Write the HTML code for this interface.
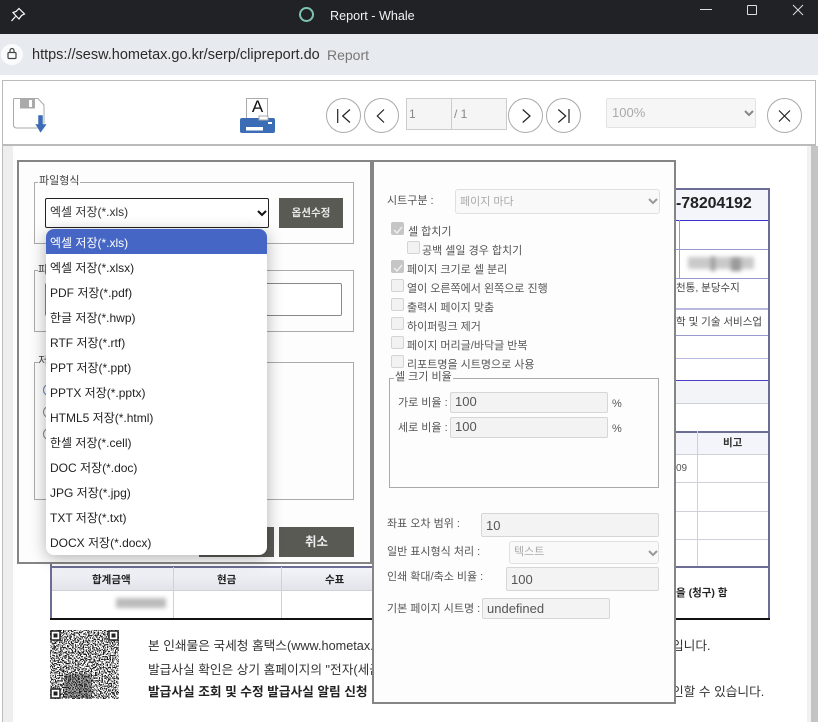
<!DOCTYPE html>
<html lang="ko"><head><meta charset="utf-8"><title>Report - Whale</title>
<style>
html,body{margin:0;padding:0;width:818px;height:722px;overflow:hidden;background:#fff}
body{position:relative;font-family:"Liberation Sans","Noto Sans CJK KR",sans-serif;font-size:12px;color:#333}
div,span,svg{position:absolute;box-sizing:border-box;white-space:nowrap}
.t{line-height:16px}
.h{background:#99c;height:1px}
.v{background:#99c;width:1px}
.dh{background:#6b6d94;height:2px}
.g{background:#cfd0d8}
.opt{left:46px;width:222px;height:25px;line-height:25px;padding-left:4px;font-size:12px;color:#222}
.lbl{font-size:11px;color:#555;line-height:14px}
.cb{width:13px;height:13px;border:1px solid #d4d4d4;border-radius:2px;background:#f2f2f2}
.cb.on{background:#c6c6c6;border-color:#c6c6c6}
.inp{background:#f3f3f3;border:1px solid #d6d6d6;border-radius:2px;color:#555;font-size:13px;padding-left:4px}
.sel{background:#f9f9f9;border:1px solid #e0e0e0;border-radius:3px;color:#aaa;font-size:11px}
.nav{width:35px;height:35px;border:1px solid #aaa;border-radius:50%;background:#fff;top:98px}
.bl{filter:blur(2px);background:#aaa}
</style></head><body>

<!-- title bar -->
<div style="left:0;top:0;width:818px;height:34px;background:#212226"></div>
<svg style="left:9px;top:6px" width="18" height="18" viewBox="0 0 18 18" fill="none" stroke="#fff" stroke-width="1.2"><path d="M10 2.500 15.500 8 12.500 9.500 10 13 8.500 11.500 4 6.500 7 5.500ZM6.500 10.500 2.500 15"/></svg>
<div style="left:299px;top:7px;width:15px;height:15px;border:2px solid #7fc4ad;border-radius:50%"></div>
<div class="t" style="left:330px;top:8px;color:#f2f2f2;font-size:12.600px">Report - Whale</div>
<div style="left:700px;top:9px;width:12px;height:1px;background:#ddd"></div>
<div style="left:747px;top:5px;width:10px;height:10px;border:1px solid #ddd;border-radius:1px"></div>
<svg style="left:792px;top:4px" width="12" height="12" viewBox="0 0 12 12" stroke="#ddd" stroke-width="1"><path d="M1 1 11 11M11 1 1 11"/></svg>

<!-- address bar -->
<div style="left:0;top:34px;width:818px;height:41px;background:#e7eaef"></div>
<div style="left:1px;top:44px;width:22px;height:21px;background:#fafbfc;border-radius:50%"></div>
<svg style="left:6px;top:47px" width="12" height="13" viewBox="0 0 12 13" fill="none" stroke="#444" stroke-width="1.2"><rect x="2" y="5.500" width="8" height="6" rx="1"/><path d="M4 5.500V3.500a2 2 0 0 1 4 0V5.500"/></svg>
<div class="t" style="left:32px;top:47px;font-size:14.500px;color:#2b2b2b">https://sesw.hometax.go.kr/serp/clipreport.do</div>
<div class="t" style="left:327px;top:47px;font-size:14px;color:#777">Report</div>

<!-- viewer -->
<div style="left:2px;top:80px;width:814px;height:642px;border:1px solid #bbb;border-bottom:0;background:#fff"></div>
<div style="left:3px;top:144px;width:812px;height:2px;background:#bbb"></div>
<div style="left:3px;top:146px;width:10px;height:576px;background:#eee"></div>
<div style="left:807px;top:146px;width:4px;height:576px;background:#f1f1f1"></div>
<div style="left:811px;top:146px;width:7px;height:576px;background:#c4c4c4"></div>

<!-- save icon -->
<svg style="left:12px;top:97px" width="38" height="37" viewBox="0 0 38 37"><path d="M2 1.500H26L32 8V31H5Q1.500 31 1.500 28V3Z" fill="#fff" stroke="#aaa"/><rect x="8" y="1.500" width="15" height="10" fill="#aaa"/><rect x="17" y="3" width="3" height="7" fill="#fff"/><path d="M26 18H31V27H35L28.500 36 23 27H26Z" fill="#3b6cb5" stroke="#fff" stroke-width=".5"/></svg>
<!-- print icon -->
<svg style="left:239px;top:97px" width="37" height="37" viewBox="0 0 37 37"><rect x="7.500" y="1.500" width="21" height="22" fill="#fff" stroke="#aaa"/><rect x="1" y="21" width="35" height="15" rx="2" fill="#3b6cb5"/><rect x="7" y="30" width="17" height="3.500" fill="#fff"/><rect x="29" y="25" width="4" height="2" fill="#fff"/><rect x="20" y="19" width="9" height="4" fill="#fff" stroke="#aaa"/></svg>
<div style="left:239px;top:97px;width:37px;text-align:center;font-size:17px;line-height:20px;color:#111">A</div>

<!-- nav -->
<div class="nav" style="left:326px"></div>
<div class="nav" style="left:364px"></div>
<div class="nav" style="left:508px"></div>
<div class="nav" style="left:546px"></div>
<div class="nav" style="left:767px"></div>
<svg style="left:326px;top:98px" width="256" height="35" viewBox="0 0 256 35" fill="none" stroke="#222" stroke-width="1.200"><path d="M11.700 11V25M24 11.500 16.700 18 24 24.500"/><path d="M58 11.500 51.300 18 58 24.500"/><path d="M196.700 11.500 204 18 196.700 24.500"/><path d="M232.300 11.500 239.700 18 232.300 24.500M243 11V25"/></svg>
<svg style="left:767px;top:98px" width="35" height="35" viewBox="0 0 35 35" stroke="#222" stroke-width="1.200"><path d="M12 12.500 23 23.500M23 12.500 12 23.500"/></svg>
<div style="left:406px;top:98px;width:46px;height:32px;background:#f5f5f5;border:1px solid #ccc;border-right:0;color:#888;line-height:30px;padding-left:2px">1</div>
<div style="left:451px;top:98px;width:56px;height:32px;background:#f5f5f5;border:1px solid #ccc;color:#888;line-height:30px;padding-left:2px">/ 1</div>
<div style="left:606px;top:98px;width:150px;height:30px;background:#f6f6f6;border:1px solid #e3e3e3;border-radius:2px;color:#aaa;font-size:13px;line-height:27px;padding-left:5px">100%</div>
<svg style="left:744px;top:110px" width="10" height="7" viewBox="0 0 10 7" fill="none" stroke="#888" stroke-width="2"><path d="M1 1 5 5 9 1"/></svg>

<!-- background document -->
<div style="left:370px;top:188px;width:400px;height:432px;background:#fff"></div>
<div style="left:676px;top:190px;width:93px;height:30px;background:#f3f5fb"></div>
<div class="t" style="left:676px;top:195px;font-size:16px;font-weight:bold;color:#222;line-height:18px;letter-spacing:-.1px">-78204192</div>
<div style="left:676px;top:188px;width:94px;height:2px;background:#6b6d94"></div>
<div style="left:676px;top:220px;width:94px;height:1px;background:#3a32d0"></div>
<div class="v" style="left:679px;top:220px;height:59px"></div>
<div class="h" style="left:676px;top:249px;width:93px"></div>
<div class="h" style="left:676px;top:278px;width:93px"></div>
<div class="h" style="left:676px;top:308px;width:93px;height:2px;background:#b9b9e0"></div>
<div class="h" style="left:676px;top:335px;width:93px"></div>
<div class="h" style="left:676px;top:358px;width:93px;background:#b9b9e0"></div>
<div class="bl" style="left:688px;top:257px;width:66px;height:12px;background:#c9c9c9"></div>
<div class="bl" style="left:711px;top:257px;width:4px;height:14px;background:#999"></div>
<div class="bl" style="left:731px;top:258px;width:10px;height:13px;background:#999"></div>
<div class="t" style="left:676px;top:280px;font-size:10.500px;color:#444">천통, 분당수지</div>
<div class="t" style="left:676px;top:314px;font-size:10.500px;color:#444">학 및 기술 서비스업</div>
<div style="left:676px;top:380px;width:93px;height:24px;background:#f3f4f8"></div>
<div style="left:676px;top:380px;width:93px;height:1px;background:#4a3fc0"></div>
<div class="g" style="left:676px;top:403px;width:93px;height:1px"></div>
<div style="left:676px;top:431px;width:93px;height:23px;background:#f3f5fa"></div>
<div class="dh" style="left:676px;top:431px;width:93px"></div>
<div class="g" style="left:676px;top:454px;width:93px;height:1px"></div>
<div class="g" style="left:676px;top:482px;width:93px;height:1px"></div>
<div class="g" style="left:676px;top:511px;width:93px;height:1px"></div>
<div class="g" style="left:676px;top:539px;width:93px;height:1px"></div>
<div class="g" style="left:697px;top:431px;width:1px;height:136px"></div>
<div class="t" style="left:723px;top:435px;font-size:10.500px;font-weight:bold;color:#333">비고</div>
<div class="t" style="left:676px;top:461px;font-size:10px;color:#555">09</div>
<div class="dh" style="left:676px;top:566px;width:93px"></div>
<div class="t" style="left:676px;top:585px;font-size:10.500px;font-weight:bold;color:#222">을 (청구) 함</div>

<!-- lower table -->
<div style="left:50px;top:564px;width:2px;height:56px;background:#6b6d94"></div>
<div style="left:768px;top:188px;width:2px;height:432px;background:#6b6d94"></div>
<div style="left:52px;top:567px;width:320px;height:23px;background:linear-gradient(#f3f5fa,#e2e4ea)"></div>
<div class="dh" style="left:50px;top:566px;width:322px"></div>
<div class="g" style="left:52px;top:590px;width:320px;height:1px"></div>
<div class="g" style="left:173px;top:567px;width:1px;height:52px"></div>
<div class="g" style="left:281px;top:567px;width:1px;height:52px"></div>
<div style="left:50px;top:618px;width:322px;height:2px;background:#111"></div>
<div style="left:676px;top:618px;width:94px;height:2px;background:#111"></div>
<div class="t" style="left:92px;top:572px;font-size:10.500px;font-weight:bold;color:#222">합계금액</div>
<div class="t" style="left:217px;top:572px;font-size:10.500px;font-weight:bold;color:#222">현금</div>
<div class="t" style="left:325px;top:572px;font-size:10.500px;font-weight:bold;color:#222">수표</div>
<div class="bl" style="left:116px;top:598px;width:50px;height:10px;background:#bbb"></div>

<!-- QR -->
<svg style="left:50px;top:630px" width="69" height="69" viewBox="0 0 69 69">
<defs><filter id="n" x="0" y="0" width="100%" height="100%" color-interpolation-filters="sRGB"><feTurbulence type="fractalNoise" baseFrequency=".75" numOctaves="1" seed="7"/><feColorMatrix values="0 0 0 0 .08 0 0 0 0 .08 0 0 0 0 .08 7 7 0 0 -6.700"/></filter></defs>
<rect width="69" height="69" fill="#fff"/><rect width="69" height="69" fill="#000" filter="url(#n)"/>
<rect x="14" y="44" width="28" height="24" fill="#222" opacity=".4"/>
<g fill="#fff" stroke="#222" stroke-width="1.500"><rect x="1" y="1" width="9" height="9"/><rect x="59" y="1" width="9" height="9"/><rect x="1" y="59" width="9" height="9"/></g>
<g fill="#222"><rect x="3.500" y="3.500" width="4" height="4"/><rect x="61.500" y="3.500" width="4" height="4"/><rect x="3.500" y="61.500" width="4" height="4"/></g>
</svg>
<div class="t" style="left:148px;top:638px;font-size:12.700px;color:#333">본 인쇄물은 국세청 홈택스(www.hometax.</div>
<div class="t" style="left:148px;top:662px;font-size:12.700px;color:#333">발급사실 확인은 상기 홈페이지의 "전자(세금</div>
<div class="t" style="left:148px;top:684px;font-size:12.700px;font-weight:bold;color:#222">발급사실 조회 및 수정 발급사실 알림 신청 "</div>
<div class="t" style="left:672px;top:638px;font-size:12.700px;color:#333">입니다.</div>
<div class="t" style="left:672px;top:684px;font-size:12.700px;color:#333">인할 수 있습니다.</div>

<!-- dialog left -->
<div style="left:17px;top:160px;width:355px;height:404px;background:#fdfdfd;border:2px solid #858585"></div>
<div style="left:34px;top:182px;width:320px;height:62px;border:1px solid #aaa"></div>
<div class="lbl" style="left:38px;top:174px;background:#fdfdfd;padding:0 1px;color:#444">파일형식</div>
<div style="left:45px;top:198px;width:224px;height:30px;background:#fff;border:1px solid #222;border-radius:2px;line-height:27px;padding-left:4px;color:#333">엑셀 저장(*.xls)</div>
<svg style="left:257px;top:210px" width="10" height="7" viewBox="0 0 10 7" fill="none" stroke="#111" stroke-width="2"><path d="M1 1 5 5 9 1"/></svg>
<div style="left:279px;top:198px;width:64px;height:30px;background:#595a54;color:#e8e8e8;font-size:10.500px;font-weight:bold;text-align:center;line-height:31px">옵션수정</div>
<div style="left:34px;top:270px;width:320px;height:62px;border:1px solid #aaa"></div>
<div class="lbl" style="left:38px;top:263px;background:#fdfdfd;color:#444">파</div>
<div style="left:45px;top:283px;width:297px;height:33px;border:1px solid #888;border-radius:2px;background:#fff"></div>
<div style="left:34px;top:362px;width:320px;height:138px;border:1px solid #aaa"></div>
<div class="lbl" style="left:38px;top:354px;background:#fdfdfd;color:#444">저</div>
<div style="left:43px;top:384px;width:12px;height:12px;border:1px solid #6a7fd0;border-radius:50%;background:#fff"></div>
<div style="left:43px;top:406px;width:12px;height:12px;border:1px solid #888;border-radius:50%;background:#fff"></div>
<div style="left:43px;top:428px;width:12px;height:12px;border:1px solid #888;border-radius:50%;background:#fff"></div>
<div style="left:199px;top:527px;width:75px;height:30px;background:#595a54"></div>
<div style="left:279px;top:527px;width:75px;height:30px;background:#595a54;color:#eee;font-size:12.500px;font-weight:bold;text-align:center;line-height:30px">취소</div>

<!-- dropdown -->
<div style="left:46px;top:229px;width:221px;height:326px;background:#fff;border-radius:8px;box-shadow:0 3px 16px rgba(0,0,0,.3);overflow:hidden"></div>
<div style="left:46px;top:229px;width:221px;height:25px;background:#4566c4;border-radius:8px 8px 0 0"></div>
<div class="opt" style="top:231px;color:#fff">엑셀 저장(*.xls)</div>
<div class="opt" style="top:256px">엑셀 저장(*.xlsx)</div>
<div class="opt" style="top:281px">PDF 저장(*.pdf)</div>
<div class="opt" style="top:306px">한글 저장(*.hwp)</div>
<div class="opt" style="top:331px">RTF 저장(*.rtf)</div>
<div class="opt" style="top:356px">PPT 저장(*.ppt)</div>
<div class="opt" style="top:381px">PPTX 저장(*.pptx)</div>
<div class="opt" style="top:406px">HTML5 저장(*.html)</div>
<div class="opt" style="top:431px">한셀 저장(*.cell)</div>
<div class="opt" style="top:456px">DOC 저장(*.doc)</div>
<div class="opt" style="top:481px">JPG 저장(*.jpg)</div>
<div class="opt" style="top:506px">TXT 저장(*.txt)</div>
<div class="opt" style="top:531px">DOCX 저장(*.docx)</div>

<!-- dialog right -->
<div style="left:372px;top:160px;width:304px;height:544px;background:#fdfdfd;border:2px solid #858585"></div>
<div class="lbl" style="left:387px;top:194px">시트구분 :</div>
<div class="sel" style="left:455px;top:189px;width:205px;height:25px;line-height:24px;padding-left:4px">페이지 마다</div>
<svg style="left:648px;top:198px" width="10" height="7" viewBox="0 0 10 7" fill="none" stroke="#999" stroke-width="2"><path d="M1 1 5 5 9 1"/></svg>

<div class="cb on" style="left:391px;top:222px"></div><div class="lbl" style="left:408px;top:225px">셀 합치기</div>
<div class="cb" style="left:407px;top:241px"></div><div class="lbl" style="left:422px;top:244px">공백 셀일 경우 합치기</div>
<div class="cb on" style="left:391px;top:260px"></div><div class="lbl" style="left:407px;top:263px">페이지 크기로 셀 분리</div>
<div class="cb" style="left:391px;top:279px"></div><div class="lbl" style="left:407px;top:282px">열이 오른쪽에서 왼쪽으로 진행</div>
<div class="cb" style="left:391px;top:298px"></div><div class="lbl" style="left:407px;top:301px">출력시 페이지 맞춤</div>
<div class="cb" style="left:391px;top:317px"></div><div class="lbl" style="left:407px;top:320px">하이퍼링크 제거</div>
<div class="cb" style="left:391px;top:336px"></div><div class="lbl" style="left:407px;top:339px">페이지 머리글/바닥글 반복</div>
<div class="cb" style="left:391px;top:355px"></div><div class="lbl" style="left:407px;top:358px">리포트명을 시트명으로 사용</div>
<svg style="left:392px;top:224px" width="12" height="50" viewBox="0 0 12 50" fill="none" stroke="#eee" stroke-width="1.500"><path d="M2 6 5 9 10 3M2 44 5 47 10 41"/></svg>

<div style="left:389px;top:378px;width:270px;height:110px;border:1px solid #aaa"></div>
<div class="lbl" style="left:394px;top:370px;background:#fdfdfd;padding:0 1px">셀 크기 비율</div>
<div class="lbl" style="left:398px;top:396px">가로 비율 :</div>
<div class="inp" style="left:450px;top:392px;width:158px;height:21px;line-height:18px">100</div>
<div class="lbl" style="left:612px;top:397px">%</div>
<div class="lbl" style="left:398px;top:421px">세로 비율 :</div>
<div class="inp" style="left:450px;top:417px;width:158px;height:21px;line-height:18px">100</div>
<div class="lbl" style="left:612px;top:422px">%</div>
<div class="lbl" style="left:387px;top:517px">좌표 오차 범위 :</div>
<div class="inp" style="left:481px;top:513px;width:178px;height:24px;line-height:24px">10</div>
<div class="lbl" style="left:387px;top:545px">일반 표시형식 처리 :</div>
<div class="sel" style="left:509px;top:541px;width:150px;height:23px;line-height:21px;padding-left:4px">텍스트</div>
<svg style="left:648px;top:550px" width="10" height="7" viewBox="0 0 10 7" fill="none" stroke="#999" stroke-width="2"><path d="M1 1 5 5 9 1"/></svg>
<div class="lbl" style="left:387px;top:570px">인쇄 확대/축소 비율 :</div>
<div class="inp" style="left:506px;top:567px;width:153px;height:24px;line-height:24px">100</div>
<div class="lbl" style="left:387px;top:602px">기본 페이지 시트명 :</div>
<div class="inp" style="left:482px;top:598px;width:128px;height:21px;line-height:19px;padding-left:4px">undefined</div>

</body></html>
